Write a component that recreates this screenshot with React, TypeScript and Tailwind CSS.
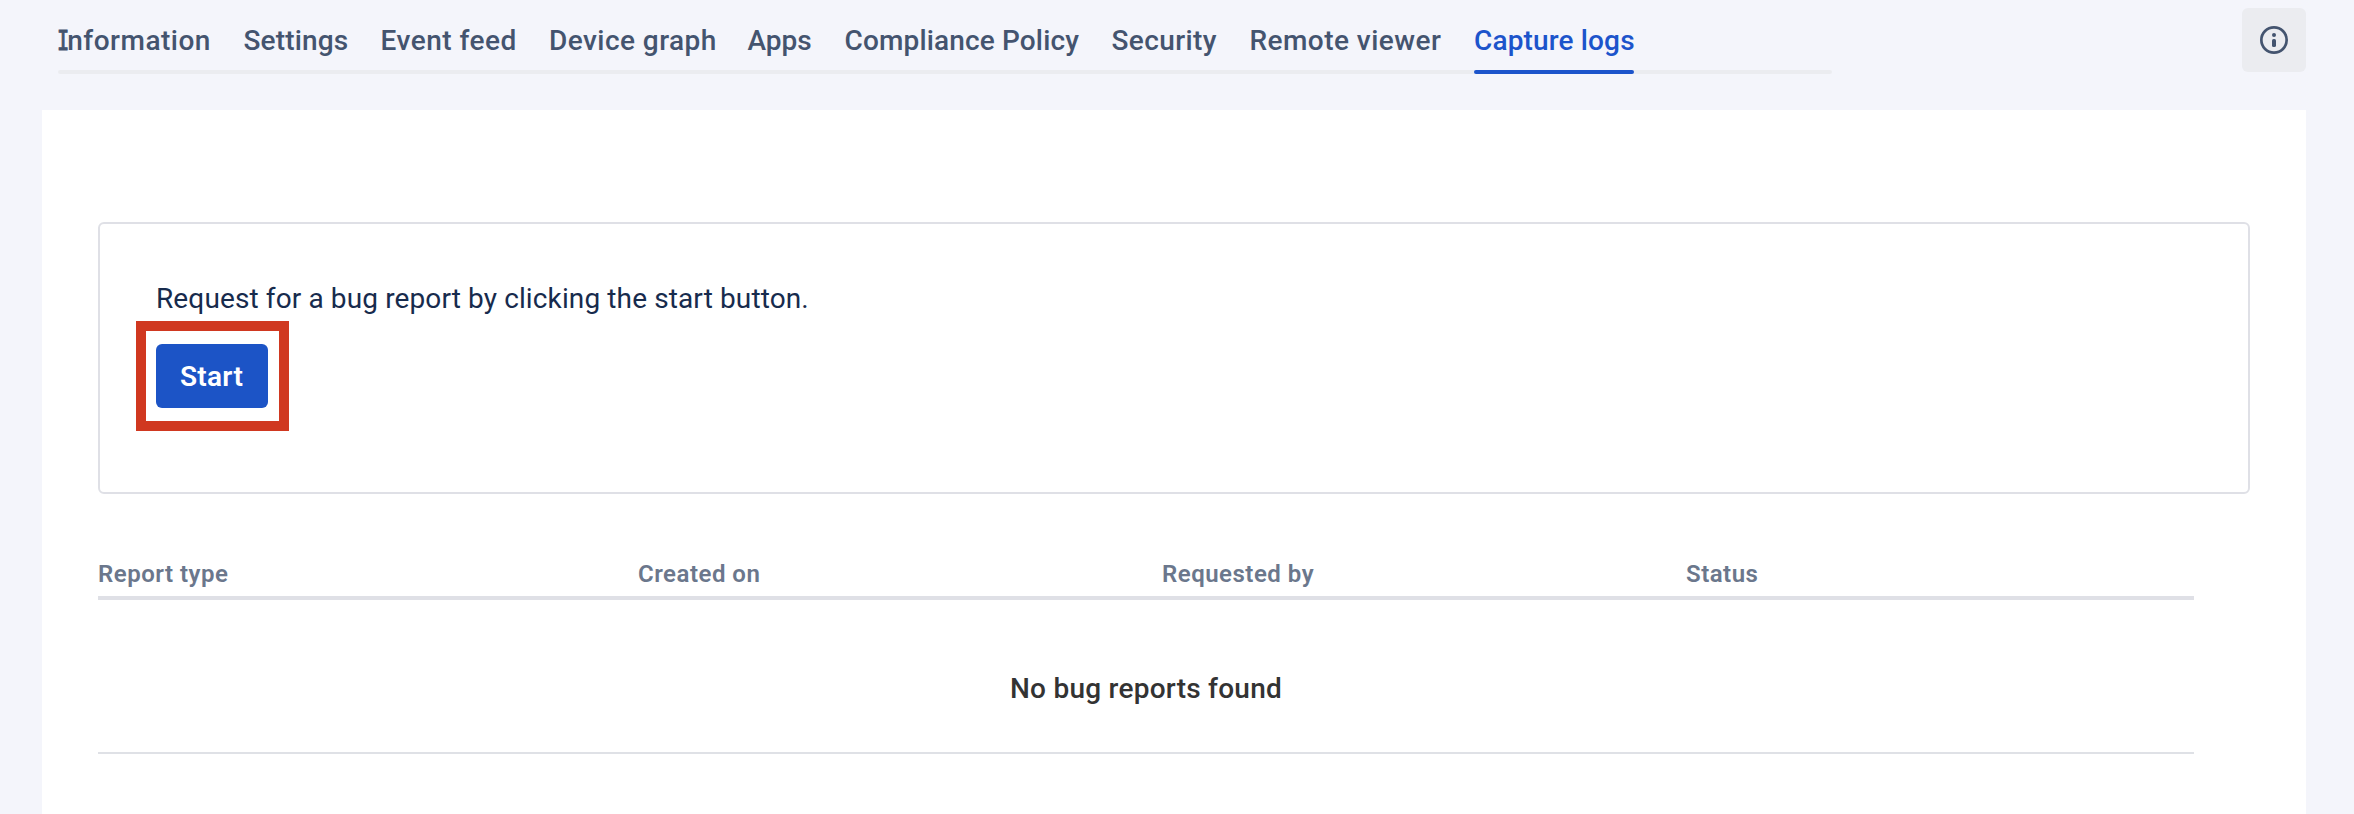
const tabs = [
  { label: "Information", box: "w-[153.5px] tracking-[0.5px]" },
  { label: "Settings", box: "w-[105px] tracking-[0.15px]" },
  { label: "Event feed", box: "w-[136.5px] tracking-[0.5px]" },
  { label: "Device graph", box: "w-[166.5px] tracking-[0.45px]" },
  { label: "Apps", box: "w-[65px]" },
  { label: "Compliance Policy", box: "w-[235px] tracking-[0.15px]" },
  { label: "Security", box: "w-[106px] tracking-[0.4px]" },
  { label: "Remote viewer", box: "w-[192.5px] tracking-[0.45px]" },
  { label: "Capture logs", box: "w-[160px] tracking-[0.15px]", active: true },
];

function SerifI() {
  return (
    <span className="-mr-[4px] -ml-[3px] inline-block scale-x-75 font-['DejaVu_Sans_Mono'] text-[27px] leading-none tracking-normal [-webkit-text-stroke:1px_#44546f]">
      I
    </span>
  );
}

function Tabs() {
  return (
    <nav className="w-[1774px] pt-[10px]">
      <ul className="flex gap-8 text-[28px] leading-[62px] font-medium whitespace-nowrap text-[#44546f]">
        {tabs.map((tab) => (
          <li
            key={tab.label}
            className={`relative h-[60px] shrink-0 ${tab.box} ${tab.active ? "text-[#1c54cb]" : ""}`}
          >
            {tab.label.startsWith("I") ? (
              <>
                <SerifI />
                {tab.label.slice(1)}
              </>
            ) : (
              tab.label
            )}
            {tab.active && (
              <span className="absolute top-full left-0 h-1 w-full rounded-[2px] bg-[#1c54cb]" />
            )}
          </li>
        ))}
      </ul>
      <div className="h-1 rounded-[2px] bg-[#ebecf0]" />
    </nav>
  );
}

function InfoButton() {
  return (
    <button className="mt-2 flex size-16 items-center justify-center rounded-[6px] bg-[#ebecf0]">
      <svg width="32" height="32" viewBox="0 0 32 32" fill="none">
        <circle cx="16" cy="16" r="12.65" stroke="#44546f" strokeWidth="2.7" />
        <circle cx="16" cy="11" r="2" fill="#44546f" />
        <rect x="14" y="15" width="4" height="8" rx="1.6" fill="#44546f" />
      </svg>
    </button>
  );
}

function RequestCard() {
  return (
    <section className="h-[272px] w-[2152px] rounded-[6px] border-2 border-[#dfe0e6] px-14 pt-[50px]">
      <p className="h-12 text-[28px] leading-[50px] tracking-[0.12px] text-[#172b4d]">
        Request for a bug report by clicking the start button.
      </p>
      <div className="mt-[-1px] -ml-5 flex h-[110px] w-[153px] items-center border-10 border-[#d03820] pl-[10px]">
        <button className="h-16 w-28 rounded-[6px] bg-[#1c54c6] pt-[2px] pr-[1px] text-center text-[28px] leading-[62px] font-semibold tracking-[0.3px] text-white">
          Start
        </button>
      </div>
    </section>
  );
}

function ReportTable() {
  return (
    <section className="mt-[58px] w-[2096px]">
      <div className="grid grid-cols-[540px_524px_524px_508px] border-b-4 border-[#dfe0e6] text-[24px] leading-[44px] font-semibold tracking-[0.5px] text-[#6b778c]">
        <span>Report type</span>
        <span>Created on</span>
        <span>Requested by</span>
        <span>Status</span>
      </div>
      <div className="h-[154px] border-b-2 border-[#dfe1e6] pt-[62px] text-center text-[28px] leading-[54px] font-medium tracking-[0.25px] text-[#333333]">
        No bug reports found
      </div>
    </section>
  );
}

export default function App() {
  return (
    <div className="h-[814px] w-[2354px] overflow-hidden bg-[#f4f5fb] font-['Roboto',sans-serif]">
      <header className="flex h-[110px] items-start justify-between pr-12 pl-[58px]">
        <Tabs />
        <InfoButton />
      </header>
      <main className="ml-[42px] h-[704px] w-[2264px] bg-white px-14 pt-28">
        <RequestCard />
        <ReportTable />
      </main>
    </div>
  );
}
